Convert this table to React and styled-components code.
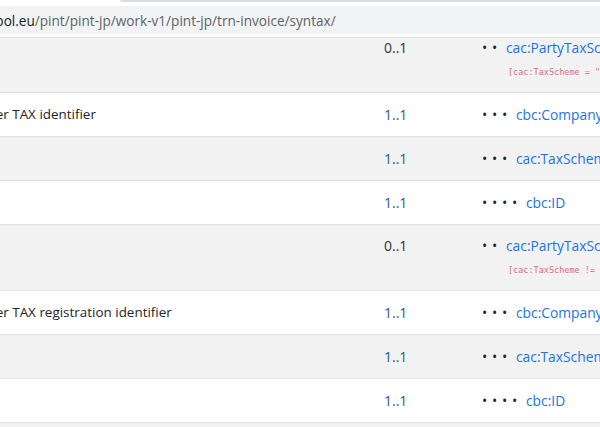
import React from "react";
import styled, { createGlobalStyle } from "styled-components";

const GlobalStyle = createGlobalStyle`
  html, body { margin: 0; padding: 0; background: #fff; }
  body { font-family: "Open Sans", "Noto Sans", sans-serif; color: #212529; }
`;

const Page = styled.div`
  width: 600px;
  height: 427px;
  overflow: hidden;
  display: flex;
  flex-direction: column;
`;

const TabStrip = styled.div`
  height: 6px;
  display: flex;
  justify-content: flex-end;
  background: #fff;
`;

const TabEdge = styled.div`
  width: 480px;
  height: 2px;
  background: #dadce0;
  border-bottom-left-radius: 3px;
`;

const AddressBar = styled.div`
  height: 28px;
  background: #f1f3f4;
  display: flex;
  align-items: center;
  overflow: hidden;
  white-space: nowrap;
  font-size: 13.6px;
`;

const Url = styled.span`
  margin-left: -62px;
  color: #5f6368;
`;

const Domain = styled.span`
  color: #202124;
`;

const HeaderFoot = styled.div`
  height: 3px;
  background: #fff;
  border-bottom: 1px solid #dee2e6;
`;

const Viewport = styled.div`
  flex: 1;
  overflow: hidden;
`;

const Table = styled.div`
  margin-top: -11px;
  margin-left: -27px;
  display: flex;
  flex-direction: column;
`;

const Row = styled.div`
  display: grid;
  grid-template-columns: 411px 99px 1fr;
  background: ${(p) => (p.$shade ? "#f2f2f2" : "#fff")};
  border-bottom: 1px solid #dee2e6;
  padding: ${(p) => (p.$tall ? "11px 0 12px" : "12px 0")};
  font-size: 14px;
  line-height: 19px;
  white-space: nowrap;
`;

const Desc = styled.div`
  padding-left: 1px;
  font-size: 13.45px;
  color: #212529;
  overflow: hidden;
`;

const Card = styled.div`
  color: ${(p) => (p.$optional ? "#333" : "#1f5a96")};
`;

const PathCell = styled.div`
  display: flex;
  flex-direction: column;
  overflow: hidden;
`;

const PathLine = styled.div`
  display: flex;
  align-items: center;
`;

const Dots = styled.span`
  display: flex;
  margin-left: -1px;
  margin-right: 4px;
`;

const Dot = styled.span`
  display: inline-block;
  width: 10px;
  color: #212529;
  font-size: 14px;
`;

const Link = styled.a`
  color: #1a73e8;
  font-size: 13.8px;
  text-decoration: none;
`;

const Predicate = styled.code`
  display: block;
  margin-top: 7px;
  padding-left: ${(p) => p.$indent}px;
  font-family: "DejaVu Sans Mono", "Liberation Mono", monospace;
  font-size: 8.5px;
  line-height: 16px;
  color: #e3687f;
`;

const rows = [
  { desc: "", card: "0..1", level: 2, name: "cac:PartyTaxScheme", pred: '[cac:TaxScheme = "VAT"]' },
  { desc: "Seller TAX identifier", card: "1..1", level: 3, name: "cbc:CompanyID" },
  { desc: "", card: "1..1", level: 3, name: "cac:TaxScheme" },
  { desc: "", card: "1..1", level: 4, name: "cbc:ID" },
  { desc: "", card: "0..1", level: 2, name: "cac:PartyTaxScheme", pred: '[cac:TaxScheme != "VAT"]' },
  { desc: "Seller TAX registration identifier", card: "1..1", level: 3, name: "cbc:CompanyID" },
  { desc: "", card: "1..1", level: 3, name: "cac:TaxScheme" },
  { desc: "", card: "1..1", level: 4, name: "cbc:ID" },
  { desc: "", card: "1..1", level: 3, name: "cbc:TaxLevelCode" },
];

export default function App() {
  return (
    <>
      <GlobalStyle />
      <Page>
        <TabStrip>
          <TabEdge />
        </TabStrip>
        <AddressBar>
          <Url>
            <Domain>docs.peppol.eu</Domain>/pint/pint-jp/work-v1/pint-jp/trn-invoice/syntax/
          </Url>
        </AddressBar>
        <HeaderFoot />
        <Viewport>
          <Table>
            {rows.map((r, i) => (
              <Row key={i} $shade={i % 2 === 0} $tall={!!r.pred}>
                <Desc>{r.desc}</Desc>
                <Card $optional={r.card.startsWith("0")}>{r.card}</Card>
                <PathCell>
                  <PathLine>
                    <Dots>
                      {Array.from({ length: r.level }, (_, k) => (
                        <Dot key={k}>•</Dot>
                      ))}
                    </Dots>
                    <Link href="#">{r.name}</Link>
                  </PathLine>
                  {r.pred && <Predicate $indent={25}>{r.pred}</Predicate>}
                </PathCell>
              </Row>
            ))}
          </Table>
        </Viewport>
      </Page>
    </>
  );
}
